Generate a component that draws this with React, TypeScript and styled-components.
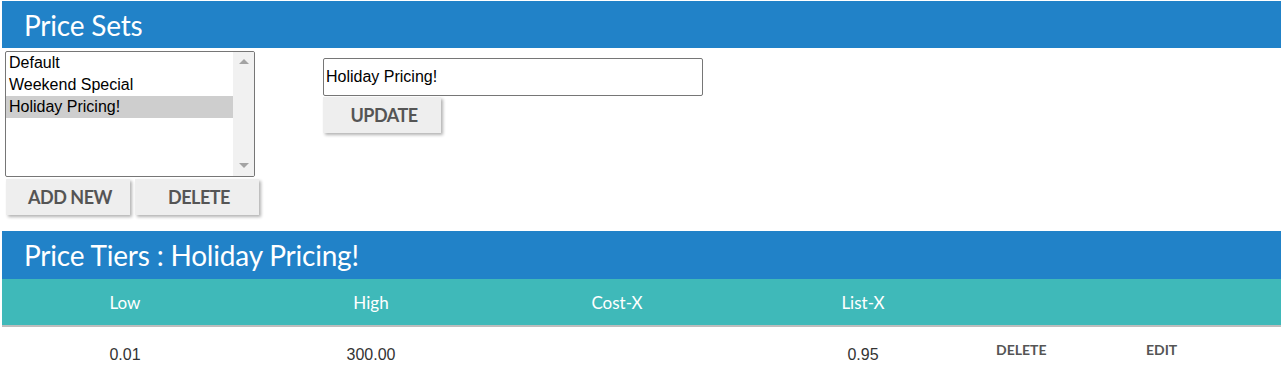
import React from "react";
import styled, { createGlobalStyle } from "styled-components";

const GlobalStyle = createGlobalStyle`
  body {
    margin: 0;
    background: #ffffff;
    font-family: "Liberation Sans", Arial, sans-serif;
  }
`;

const Page = styled.div`
  padding: 1px 2px 0 2px;
`;

const SectionHeader = styled.h2<{ $height: number }>`
  margin: 0;
  height: ${({ $height }) => $height}px;
  padding: 0 22px;
  display: flex;
  align-items: center;
  background-color: #2182c8;
  color: #ffffff;
  font-family: Lato, sans-serif;
  font-weight: 400;
  font-size: 28px;
  letter-spacing: -0.2px;
`;

const SetsArea = styled.div`
  display: flex;
  align-items: flex-start;
  padding: 3px 0 0 3px;
  height: 180px;
`;

const ListColumn = styled.div`
  display: flex;
  flex-direction: column;
  width: 256px;
`;

const ListBox = styled.div`
  display: flex;
  width: 250px;
  height: 126px;
  box-sizing: border-box;
  border: 1px solid #767676;
  border-radius: 2px;
  overflow: hidden;
`;

const Options = styled.ul`
  flex: 1;
  margin: 0;
  padding: 0;
  list-style: none;
`;

const Option = styled.li<{ $selected?: boolean }>`
  height: 22px;
  line-height: 21px;
  padding-left: 3px;
  font-size: 16px;
  color: #000000;
  background-color: ${({ $selected }) => ($selected ? "#cecece" : "transparent")};
`;

const ScrollTrack = styled.div`
  width: 21px;
  background-color: #f1f1f1;
  display: flex;
  flex-direction: column;
  justify-content: space-between;
  align-items: center;
  padding: 7px 0 8px;
`;

const Arrow = styled.span<{ $down?: boolean }>`
  width: 0;
  height: 0;
  border-left: 5px solid transparent;
  border-right: 5px solid transparent;
  ${({ $down }) =>
    $down ? "border-top: 5px solid #a3a3a3;" : "border-bottom: 5px solid #a3a3a3;"}
`;

const ButtonRow = styled.div`
  display: flex;
  gap: 5px;
  margin-top: 2px;
  padding-left: 1px;
`;

const GreyButton = styled.button<{ $width: number }>`
  width: ${({ $width }) => $width}px;
  height: 36px;
  padding: 0 0 0 4px;
  border: none;
  background-color: #eeeeee;
  box-shadow: 2px 2px 3px rgba(0, 0, 0, 0.3);
  color: #555555;
  font-family: Lato, sans-serif;
  font-weight: 700;
  font-size: 18px;
  letter-spacing: -0.5px;
  cursor: pointer;
`;

const EditColumn = styled.div`
  display: flex;
  flex-direction: column;
  gap: 1px;
  margin-left: 62px;
  padding-top: 7px;
`;

const NameInput = styled.input`
  width: 380px;
  height: 38px;
  box-sizing: border-box;
  border: 1px solid #767676;
  border-radius: 2px;
  padding: 0 2px;
  font-family: "Liberation Sans", Arial, sans-serif;
  font-size: 16px;
  color: #000000;
  outline: none;
`;

const Table = styled.table`
  width: 100%;
  border-collapse: collapse;
  table-layout: fixed;
`;

const HeadCell = styled.th`
  height: 46px;
  padding: 0;
  background-color: #3fb9b9;
  border-bottom: 2px solid #bdbdbd;
  color: #ffffff;
  font-family: Lato, sans-serif;
  font-weight: 400;
  font-size: 17px;
  text-align: center;
`;

const Cell = styled.td`
  height: 52px;
  padding: 2px 0 0;
  text-align: center;
  font-size: 16px;
  color: #333333;
  vertical-align: middle;
`;

const ActionCell = styled.td`
  padding: 0 0 8px 10px;
  text-align: left;
  vertical-align: middle;
`;

const ActionLink = styled.a`
  color: #555555;
  font-family: Lato, sans-serif;
  font-weight: 700;
  font-size: 14px;
  text-decoration: none;
  cursor: pointer;
`;

const priceSets = ["Default", "Weekend Special", "Holiday Pricing!"];

const tiers = [{ low: "0.01", high: "300.00", cost: "", list: "0.95" }];

export default function App() {
  const selected = "Holiday Pricing!";
  return (
    <Page>
      <GlobalStyle />
      <SectionHeader $height={47}>Price Sets</SectionHeader>
      <SetsArea>
        <ListColumn>
          <ListBox>
            <Options>
              {priceSets.map((name) => (
                <Option key={name} $selected={name === selected}>
                  {name}
                </Option>
              ))}
            </Options>
            <ScrollTrack>
              <Arrow />
              <Arrow $down />
            </ScrollTrack>
          </ListBox>
          <ButtonRow>
            <GreyButton $width={124}>ADD NEW</GreyButton>
            <GreyButton $width={124}>DELETE</GreyButton>
          </ButtonRow>
        </ListColumn>
        <EditColumn>
          <NameInput defaultValue={selected} />
          <GreyButton $width={118}>UPDATE</GreyButton>
        </EditColumn>
      </SetsArea>
      <SectionHeader $height={48}>Price Tiers : {selected}</SectionHeader>
      <Table>
        <colgroup>
          <col style={{ width: 246 }} />
          <col style={{ width: 246 }} />
          <col style={{ width: 246 }} />
          <col style={{ width: 246 }} />
          <col style={{ width: 150 }} />
          <col />
        </colgroup>
        <thead>
          <tr>
            <HeadCell>Low</HeadCell>
            <HeadCell>High</HeadCell>
            <HeadCell>Cost-X</HeadCell>
            <HeadCell>List-X</HeadCell>
            <HeadCell />
            <HeadCell />
          </tr>
        </thead>
        <tbody>
          {tiers.map((t) => (
            <tr key={t.low}>
              <Cell>{t.low}</Cell>
              <Cell>{t.high}</Cell>
              <Cell>{t.cost}</Cell>
              <Cell>{t.list}</Cell>
              <ActionCell>
                <ActionLink>DELETE</ActionLink>
              </ActionCell>
              <ActionCell>
                <ActionLink>EDIT</ActionLink>
              </ActionCell>
            </tr>
          ))}
        </tbody>
      </Table>
    </Page>
  );
}
